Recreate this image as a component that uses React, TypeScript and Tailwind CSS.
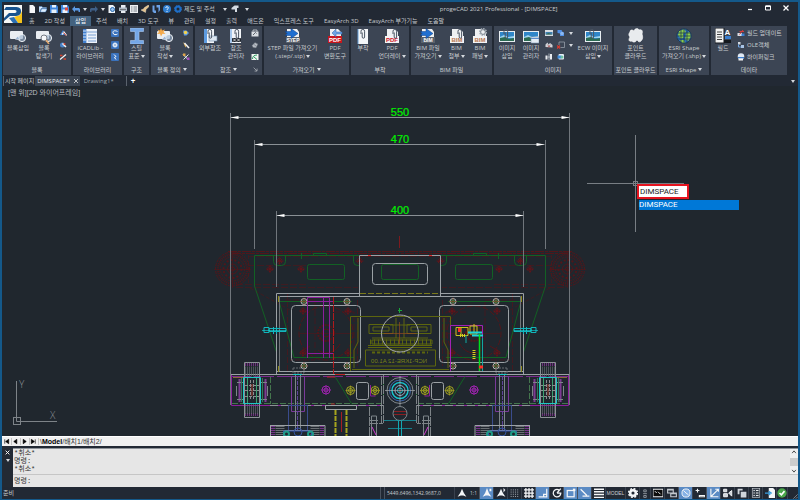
import React from "react";

type IconProps = { className?: string; children: React.ReactNode };

const Icon = ({ className = "size-4", children }: IconProps) => (
  <svg viewBox="0 0 16 16" className={className} aria-hidden="true">
    {children}
  </svg>
);

/* ---------- shared icon parts ---------- */

const Clip = ({ x = 0 }: { x?: number }) => (
  <path
    d={`M${x + 5} 6V3.2a1.8 1.8 0 0 1 3.6 0V9a1.2 1.2 0 0 1-2.4 0V4.5`}
    fill="none"
    stroke="#4b5563"
    strokeWidth="1"
  />
);

const Landscape = () => (
  <>
    <rect x="0" y="3" width="16" height="11" fill="#e8eef2" />
    <rect x="1" y="4" width="14" height="9" fill="#2f86c8" />
    <path d="M1 9l4-2 4 2 6-1v2H1z" fill="#9fd4ef" />
    <path d="M1 13v-3l5-1 4 2 5-1v3z" fill="#2c6b52" />
  </>
);

const Bubble = () => (
  <>
    <rect x="0" y="3" width="13" height="8" rx="1" fill="#e9edf2" />
    <circle cx="12" cy="10" r="3.6" fill="#9db4cf" fillOpacity="0.6" stroke="#eef2f6" />
    <path d="M5 11l3-3 2 4z" fill="#9cb6d6" stroke="#eef2f6" strokeWidth="0.6" />
  </>
);

const FileBadge = ({ label, color, solid }: { label: string; color: string; solid?: boolean }) => (
  <>
    <path d="M3 1h8l3 3v11H3z" fill="#eef0f2" />
    <rect x="1" y="8" width="14" height="7" fill={solid ? color : "#f3f4f6"} />
    <text
      x="8"
      y="14"
      textAnchor="middle"
      fontFamily="Liberation Sans"
      fontWeight="bold"
      fontSize="6"
      fill={solid ? "#ffffff" : color}
    >
      {label}
    </text>
  </>
);

const ArrowFile = ({ label }: { label: string }) => (
  <>
    <path d="M2 1h10l2 3v11H1V9h1z" fill="#eef0f2" />
    <rect x="1" y="9" width="14" height="6" fill="#59616b" />
    <text x="8" y="14" textAnchor="middle" fontFamily="Liberation Sans" fontWeight="bold" fontSize="5" fill="#fff">
      {label}
    </text>
    <path d="M0 3.500h6V0.500l7 5-7 5v-3H0l2-2z" fill="#1f6fd1" stroke="#0d3f86" strokeWidth="0.5" />
  </>
);

/* ---------- ribbon icons ---------- */

const big: Record<string, React.ReactNode> = {
  insert: <Bubble />,
  explore: (
    <>
      <Bubble />
      <circle cx="8" cy="10" r="3" fill="#f5f7fa" stroke="#555d68" strokeWidth="0.8" />
      <path d="M10 12l3 4" stroke="#e3a86b" strokeWidth="1.6" />
    </>
  ),
  lib: (
    <>
      <rect x="1" y="1" width="14" height="14" fill="#eef3fa" />
      <path d="M4 1v14M1 4h14M6 7h8M6 10h8M6 13h8" stroke="#5b8cc9" strokeWidth="0.8" />
      <path d="M1 1h3v14H1z" fill="#3f7fd0" />
      <path d="M1 3h3M1 6h3M1 9h3M1 12h3" stroke="#fff" strokeWidth="0.8" />
    </>
  ),
  steel: <path d="M1.500 0h13v3.500H10v9h4.500V16h-13v-3.500H6v-9H1.500z" fill="#75a7e6" stroke="#a9cbf5" strokeWidth="0.6" />,
  create: (
    <>
      <Bubble />
      <path d="M4 0l1 2.500L8 1.500 6.500 4 8.500 6 5.500 5.800 4 8.500 3 5.800 0 6l2-2L0.500 1.500 3 2.500z" fill="#f4a94a" />
    </>
  ),
  xref: (
    <>
      <path d="M2 1h10v14H2z" fill="#f1f4f8" />
      <path d="M2 1h3v14H2z" fill="#5d9be0" />
      <rect x="7" y="8" width="8" height="5" fill="#dce6f1" stroke="#6e8cab" strokeWidth="0.6" />
      <Clip x={1} />
    </>
  ),
  xrefMgr: (
    <>
      <path d="M2 1h11v14H2z" fill="#f1f4f8" />
      <rect x="4" y="10" width="9" height="4" fill="#20262e" />
      <path d="M5 10.500l3 3M8 10.500l-3 3M9 10.500l3 3M12 10.500l-3 3" stroke="#fff" strokeWidth="0.7" />
      <path d="M3 1v14" stroke="#5d9be0" />
      <Clip x={2} />
    </>
  ),
  step: <ArrowFile label="STEP" />,
  pdf: (
    <>
      <FileBadge label="PDF" color="#c8161d" solid />
      <path d="M15 4H9V1L5 5l4 4V6h6z" fill="#6fa5e4" stroke="#2c62a8" strokeWidth="0.5" />
    </>
  ),
  attach: (
    <>
      <path d="M3 1h10v15H3z" fill="#f4f6f8" />
      <path d="M3 1v15" stroke="#68a0d8" />
      <Clip x={1} />
    </>
  ),
  pdfUnder: (
    <>
      <FileBadge label="PDF" color="#d0162b" />
      <Clip x={4} />
    </>
  ),
  bimFile: <ArrowFile label="BIM" />,
  bimAttach: (
    <>
      <FileBadge label="BIM" color="#b87850" />
      <Clip x={4} />
    </>
  ),
  bimPanel: (
    <>
      <FileBadge label="BIM" color="#b87850" />
      <circle cx="11" cy="4" r="3" fill="none" stroke="#aab2ba" strokeWidth="2" strokeDasharray="1.500 0.8" />
      <circle cx="11" cy="4" r="2.400" fill="none" stroke="#828b95" />
    </>
  ),
  imgInsert: (
    <>
      <Landscape />
      <Clip />
    </>
  ),
  imgMgr: (
    <>
      <Landscape />
      <rect x="8" y="9" width="8" height="6" fill="#e5edf5" stroke="#7a93ad" strokeWidth="0.6" />
      <path d="M8 10.500h8" stroke="#5b8cc9" />
    </>
  ),
  cloud: (
    <path
      d="M2 4c0-3 3-2 4-1 1-3 4-3 5-1 3-1 4 1 3 4 1 3 1 5-1 7-2 2-3 0-4-1-1 2-4 3-5 1-3 1-4-1-2-4-2-2-1-4 0-5z"
      fill="#e8ebee"
      stroke="#fff"
      strokeWidth="0.6"
    />
  ),
  globe: (
    <>
      <circle cx="8" cy="8" r="7.600" fill="#2d6fb4" />
      <path d="M3 3l5-2 2 3-3 2 1 3-3 2-3-4zM10 5l4-1 1 5-3 4-3-2 1-3zM4 12l4 0 1 3-3 0z" fill="#8ccc4c" />
      <path d="M1 5h14M1 8h14M1 11h14M5 1v14M8 1v14M11 1v14" stroke="#16324f" strokeWidth="0.700" />
      <circle cx="8" cy="8" r="7.300" fill="none" stroke="#22384c" />
    </>
  ),
  field: (
    <>
      <rect x="0" y="0" width="9" height="15" fill="#f2f2f2" stroke="#171b20" />
      <path d="M2 4h5M2 6.500h5M2 9h5M2 11.500h5" stroke="#444" />
      <rect x="10" y="8" width="6" height="3" fill="#3b7fd0" />
      <rect x="9" y="12" width="7" height="3" fill="#14181d" />
      <text x="12.500" y="7" textAnchor="middle" fontFamily="Liberation Sans" fontWeight="bold" fontSize="8" fill="#fff">
        A
      </text>
    </>
  ),
};

const small: Record<string, React.ReactNode> = {
  a1: (
    <>
      <path d="M2 12L8 2l5 10z" fill="#3f82d6" />
      <path d="M6 11l4-5 5 7" stroke="#f2f4f7" strokeWidth="2.500" fill="none" />
      <path d="M9 7l5 6" stroke="#d8442e" strokeWidth="2" />
    </>
  ),
  a2: (
    <>
      <circle cx="7" cy="8" r="5" fill="#4b84c9" />
      <path d="M7 5l7 7" stroke="#f4f4f4" strokeWidth="3" />
      <circle cx="11" cy="6" r="2" fill="#d8442e" />
    </>
  ),
  a3: (
    <>
      <path d="M2 13L14 3" stroke="#f4f4f4" strokeWidth="2.500" />
      <path d="M2 5h5M9 12h5" stroke="#d8442e" strokeWidth="3" />
    </>
  ),
  l1: (
    <>
      <rect width="16" height="16" rx="2" fill="#3a72bd" />
      <path d="M13 5C7 2 3 4 4 8s6 4 9 2" stroke="#fff" strokeWidth="2" fill="none" />
    </>
  ),
  l2: (
    <>
      <rect width="16" height="16" rx="2" fill="#3a72bd" />
      <circle cx="8" cy="8" r="5" fill="#dfeaf7" />
      <path d="M5 5l6 6M11 5l-6 6" stroke="#6a94cd" />
    </>
  ),
  l3: (
    <>
      <rect width="16" height="16" rx="2" fill="#3a72bd" />
      <path d="M6 3l4 4-3 2 3 4" stroke="#fff" strokeWidth="2" fill="none" />
    </>
  ),
  b1: (
    <>
      <path d="M2 3h7l5 5-5 5H4z" fill="#5c9be5" />
      <circle cx="7" cy="7" r="3.500" fill="#f3d24c" />
    </>
  ),
  b2: (
    <>
      <path d="M2 2l5 11 2-4z" fill="#e9b95c" />
      <path d="M5 4l9 10" stroke="#f4f4f4" strokeWidth="3" />
    </>
  ),
  b3: (
    <>
      <path d="M2 3l10 10M13 3L3 13" stroke="#e0e4e8" strokeWidth="2" />
      <path d="M10 9h5v5h-5z" fill="#a54fc0" />
      <path d="M2 1h5v5H2z" fill="#e0a64a" />
    </>
  ),
  c1: (
    <>
      <path d="M1 5h14v10H1z" fill="#d9dde2" />
      <path d="M4 5V2h8v3" stroke="#d9dde2" fill="none" strokeWidth="1.500" />
      <path d="M4 12l5-5 2 2" stroke="#343c48" fill="none" strokeWidth="1.500" />
    </>
  ),
  c2: <path d="M2 9l6-6 6 3-4 8-6-1zM6 7l4 3" fill="#b5bbc3" stroke="#5a626c" />,
  c3: (
    <>
      <rect x="1" y="2" width="14" height="12" fill="#f2f5f2" />
      <path d="M3 12c0-5 3-8 9-8M6 8l6 5" stroke="#2c9a62" strokeWidth="2" fill="none" />
    </>
  ),
  i1: (
    <>
      <rect x="0" y="2" width="16" height="12" fill="#d7dde3" />
      <rect x="1" y="6" width="14" height="5" fill="#3f7fb0" />
      <path d="M1 11l6-3 8 3z" fill="#356a4d" />
    </>
  ),
  i2: (
    <>
      <path d="M1 12V7l4-4 2 4 3-3 5 4v5z" fill="#cfd3d8" />
      <path d="M5 8l6 5M11 8l-6 5" stroke="#a33" strokeWidth="1.200" />
    </>
  ),
  i3: (
    <>
      <path d="M1 5h4v8H1zM10 2h4v11h-4z" fill="#e9ecef" />
      <path d="M8 1v14M5 8h6" stroke="#cfd6dd" strokeWidth="1.500" />
    </>
  ),
  j1: (
    <>
      <path d="M1 2h8l2 4 3 1v7H6V9L1 8z" fill="#4f8fe6" />
      <circle cx="10" cy="9" r="3.500" fill="#8cb8f0" />
    </>
  ),
  j2: (
    <>
      <path d="M4 2h11v11H7M4 2v6" stroke="#9aa2ac" strokeWidth="1.500" fill="none" />
      <path d="M0 9l6 6M6 9l-6 6" stroke="#e03a2c" strokeWidth="2.200" />
    </>
  ),
  j3: (
    <>
      <rect x="3" y="2" width="11" height="11" rx="2" fill="#e7eef5" />
      <path d="M1 5h8v6H1z" fill="#3e8ddb" />
      <circle cx="10" cy="8" r="3" fill="#6fc1a1" />
    </>
  ),
  f1: (
    <>
      <path d="M1 8h9v6H1z" fill="#d9dde2" />
      <path d="M5 5h9M12 2l-7 9" stroke="#d33c3c" strokeWidth="2" />
      <path d="M9 9h6v5H9z" fill="#3b7fd0" />
    </>
  ),
  f2: (
    <>
      <path d="M2 2h5v5H2z" fill="#cfd6de" />
      <path d="M3 7v5h6" stroke="#6fa5e4" strokeWidth="2" fill="none" />
      <path d="M8 8h6v6H8z" fill="#a8c3e4" />
    </>
  ),
  f3: (
    <>
      <circle cx="8" cy="7" r="6.500" fill="#dfe9f4" />
      <path d="M2 8h12v3H2z" fill="#3b7fd0" />
      <path d="M3 11h9v4H3z" fill="#f4f4f4" />
    </>
  ),
};

const Caret = () => (
  <svg viewBox="0 0 4 3" className="inline-block h-[3px] w-1 shrink-0" aria-hidden="true">
    <path d="M0 0h4L2 3z" fill="#d5d9de" />
  </svg>
);

/* ---------- ribbon ---------- */

type BigProps = { icon: string; lines: string[]; caret?: boolean; width: string };

const BigButton = ({ icon, lines, caret, width }: BigProps) => (
  <button className={`flex flex-col items-center text-center ${width}`}>
    <Icon>{big[icon]}</Icon>
    {lines.map((line, i) => (
      <span key={line} className="flex items-center gap-px leading-2 whitespace-nowrap">
        {line}
        {caret && i === lines.length - 1 && <Caret />}
      </span>
    ))}
  </button>
);

const SmallColumn = ({ icons, carets = 0, width }: { icons: string[]; carets?: number; width: string }) => (
  <div className={`flex flex-col items-center gap-1 pt-px ${width}`}>
    {icons.map((name, i) => (
      <button key={name} aria-label={name} className="flex w-full items-center justify-center gap-1">
        <Icon className="size-2">{small[name]}</Icon>
        {carets > 0 && (i < carets ? <Caret /> : <span className="w-1" />)}
      </button>
    ))}
  </div>
);

type PanelProps = { title: string; caret?: boolean; launcher?: boolean; width: string; children: React.ReactNode };

const Panel = ({ title, caret, launcher, width, children }: PanelProps) => (
  <section className={`flex shrink-0 flex-col bg-[#3c4554] ${width}`}>
    <div className="flex h-[38px] pt-0.5">{children}</div>
    <h2 className="relative flex h-[11px] items-center justify-center gap-0.5 whitespace-nowrap">
      {title}
      {caret && <Caret />}
      {launcher && (
        <Icon className="absolute right-1 size-[5px]">
          <path d="M2 2l10 10M13 5v8H5" fill="none" stroke="#c8ccd0" strokeWidth="2" />
        </Icon>
      )}
    </h2>
  </section>
);

const Ribbon = () => (
  <div className="flex gap-0.5 overflow-hidden pl-px">
    <Panel title="블록" width="w-[68px]">
      <BigButton icon="insert" lines={["블록삽입"]} width="w-[30px]" />
      <BigButton icon="explore" lines={["블록", "탐색기"]} width="w-[22px]" />
      <SmallColumn icons={["a1", "a2", "a3"]} width="w-4" />
    </Panel>
    <Panel title="라이브러리" width="w-[49px]">
      <BigButton icon="lib" lines={["iCADLib -", "라이브러리"]} width="w-[34px]" />
      <SmallColumn icons={["l1", "l2", "l3"]} width="w-[15px]" />
    </Panel>
    <Panel title="구조" width="w-[25px]">
      <BigButton icon="steel" lines={["스틸", "표준"]} caret width="w-full" />
    </Panel>
    <Panel title="블록 정의" caret width="w-[42px]">
      <BigButton icon="create" lines={["블록", "작성"]} caret width="w-[28px]" />
      <SmallColumn icons={["b1", "b2", "b3"]} width="w-[14px]" />
    </Panel>
    <Panel title="참조" caret launcher width="w-[67px]">
      <BigButton icon="xref" lines={["외부참조"]} width="w-[30px]" />
      <BigButton icon="xrefMgr" lines={["참조", "관리자"]} width="w-[22px]" />
      <SmallColumn icons={["c1", "c2", "c3"]} width="w-[15px]" />
    </Panel>
    <Panel title="가져오기" caret width="w-[85px]">
      <BigButton icon="step" lines={["STEP 파일 가져오기", "(.step/.stp)"]} caret width="w-[57px]" />
      <BigButton icon="pdf" lines={["PDF", "변환도구"]} width="w-[28px]" />
    </Panel>
    <Panel title="부착" width="w-[58px]">
      <BigButton icon="attach" lines={["부착"]} width="w-6" />
      <BigButton icon="pdfUnder" lines={["PDF", "언더레이"]} caret width="w-[34px]" />
    </Panel>
    <Panel title="BIM 파일" width="w-[81px]">
      <BigButton icon="bimFile" lines={["BIM 파일", "가져오기"]} caret width="w-[34px]" />
      <BigButton icon="bimAttach" lines={["BIM", "첨부"]} caret width="w-[23px]" />
      <BigButton icon="bimPanel" lines={["BIM", "패널"]} caret width="w-6" />
    </Panel>
    <Panel title="이미지" width="w-[118px]">
      <BigButton icon="imgInsert" lines={["이미지", "삽입"]} width="w-[26px]" />
      <BigButton icon="imgMgr" lines={["이미지", "관리자"]} width="w-[22px]" />
      <SmallColumn icons={["i1", "i2", "i3"]} width="w-[14px]" />
      <SmallColumn icons={["j1", "j2", "j3"]} carets={2} width="w-[18px]" />
      <BigButton icon="imgInsert" lines={["ECW 이미지", "삽입"]} caret width="w-[38px]" />
    </Panel>
    <Panel title="포인트 클라우드" width="w-[43px]">
      <BigButton icon="cloud" lines={["포인트", "클라우드"]} width="w-full" />
    </Panel>
    <Panel title="ESRI Shape" caret width="w-[50px]">
      <BigButton icon="globe" lines={["ESRI Shape", "가져오기 (.shp)"]} caret width="w-full" />
    </Panel>
    <Panel title="데이타" width="w-[76px]">
      <BigButton icon="field" lines={["필드"]} width="w-6" />
      <div className="flex flex-col gap-1 pt-px">
        {[
          ["f1", "필드 업데이트"],
          ["f2", "OLE객체"],
          ["f3", "하이퍼링크"],
        ].map(([icon, label]) => (
          <button key={icon} className="flex items-center gap-0.5 pl-0.5 leading-2 whitespace-nowrap">
            <Icon className="size-2">{small[icon]}</Icon>
            {label}
          </button>
        ))}
      </div>
    </Panel>
  </div>
);

/* ---------- title bar ---------- */

const quick: [string, React.ReactNode][] = [
  ["새로 만들기", <path d="M3 0h7l4 4v12H3z" fill="#f4f6f8" />],
  ["열기", <path d="M0 3h6l1 2h8v2H4L2 14H0zM5 8h11l-3 6H3z" fill="#dfeefc" stroke="#4b8fdc" strokeWidth="0.8" />],
  [
    "저장",
    <>
      <path d="M0 0h13l3 3v13H0z" fill="#3f86de" />
      <path d="M4 0h8v5H4zM3 9h10v7H3z" fill="#e8f1fb" />
    </>,
  ],
  [
    "다른 이름으로 저장",
    <>
      <path d="M0 0h13l3 3v13H0z" fill="#3f86de" />
      <path d="M4 0h8v5H4zM3 9h10v7H3z" fill="#e8f1fb" />
      <path d="M8 5h6v6H8z" fill="#e0483c" />
    </>,
  ],
  ["실행 취소", <path d="M6 2v4h8l2 2v6h-3v-3H6v4L0 8z" fill="#5c9be5" />],
  ["다시 실행", <path d="M10 2v4H2L0 8v6h3v-3h7v4l6-7z" fill="#3f5f86" />],
  [
    "미리보기",
    <>
      <path d="M1 0h9l4 4v12H1z" fill="#eef3f8" />
      <circle cx="9" cy="9" r="4" fill="#9cc4ee" stroke="#2b6cb0" strokeWidth="2" />
    </>,
  ],
  [
    "인쇄",
    <>
      <path d="M4 0h9v6H4zM4 10h9v6H4z" fill="#e8edf2" />
      <path d="M0 5h16v7H0z" fill="#aeb8c4" />
      <path d="M2 9h12v1H2z" fill="#333" />
    </>,
  ],
  [
    "목록",
    <>
      <rect width="16" height="16" fill="#eceff2" />
      <path d="M2 4h3M7 4h7M2 8h3M7 8h7M2 12h3M7 12h7" stroke="#545c66" strokeWidth="1.500" />
    </>,
  ],
  ["특성 일치", <path d="M15 0l1 3-6 6-1 6-9-5 5-2 2-3z" fill="#e5c48d" stroke="#fff3db" strokeWidth="0.8" />],
  ["전환", <path d="M1 1h4v10h3v5H4l-3-3zM9 0h7v10l-3 5V5H9z" fill="#6ca2e6" />],
  [
    "도움말",
    <>
      <circle cx="8" cy="8" r="8" fill="#2f7ed0" />
      <path d="M5.500 6a2.500 2.500 0 1 1 3.500 2.200c-1 .4-1 1-1 2M8 12v2" stroke="#fff" strokeWidth="1.800" fill="none" />
    </>,
  ],
  [
    "작업공간",
    <>
      <circle cx="8" cy="8" r="5" fill="none" stroke="#1f6fc8" strokeWidth="4" />
      <circle cx="8" cy="8" r="7" fill="none" stroke="#1f6fc8" strokeWidth="2" strokeDasharray="3 2.500" />
    </>,
  ],
];

const menus = [
  "홈",
  "2D 작성",
  "삽입",
  "주석",
  "배치",
  "3D 도구",
  "뷰",
  "관리",
  "설정",
  "출력",
  "애드온",
  "익스프레스 도구",
  "EasyArch 3D",
  "EasyArch 부가기능",
  "도움말",
];

const TitleBar = () => (
  <header className="relative flex h-6">
    <svg viewBox="0 0 18 18" className="mt-[3px] ml-0.5 size-[18px] shrink-0" aria-hidden="true">
      <rect width="18" height="18" fill="#f6f7f5" />
      <path d="M18 6v12h-4L10 12l6-2z" fill="#f4c21b" />
      <path d="M14 18H9l-4-5 5-1z" fill="#2a6fb4" />
      <path d="M2 2h9c4 0 6 1 6 4.500S14 11 11 11H6l-6 5v-3l5-5h6c2 0 2-3 0-3H0z" fill="#17538f" />
    </svg>
    <div className="flex min-w-0 flex-1 flex-col">
      <div className="flex h-[14px] items-center pl-1.5">
        <div className="flex items-center gap-[3px]">
          {quick.map(([label, shape], i) => (
            <React.Fragment key={label}>
              <button aria-label={label}>
                <Icon className="size-2">{shape}</Icon>
              </button>
              {(i === 4 || i === 5) && <Caret />}
            </React.Fragment>
          ))}
        </div>
        <button className="ml-0.5 flex items-center gap-2 whitespace-nowrap">
          제도 및 주석 <Caret />
        </button>
        <button aria-label="레이어" className="ml-1">
          <Icon className="size-2">
            <path d="M1 6l6-5h8v5h-3v8H8V9H1z" fill="#d4dae1" />
          </Icon>
        </button>
        <span className="ml-1.5 flex">
          <Caret />
        </span>
      </div>
      <nav className="flex h-[10px] items-center pl-0.5 whitespace-nowrap">
        {menus.map((m) => (
          <a
            key={m}
            href="#"
            className={m === "삽입" ? "bg-[#43627f] px-[5px] leading-[10px] text-white" : "px-[5px] leading-[10px]"}
          >
            {m}
          </a>
        ))}
      </nav>
    </div>
    <h1 className="absolute top-[3px] left-[55%] leading-2">progeCAD 2021 Professional - [DIMSPACE]</h1>
    <div className="absolute top-0.5 right-2 flex gap-2.5">
      <button aria-label="최소화">
        <Icon className="size-2">
          <path d="M4 11h8" stroke="#fff" strokeWidth="2.500" />
        </Icon>
      </button>
      <button aria-label="최대화">
        <Icon className="size-2">
          <path d="M3 4h10v8H3z" fill="none" stroke="#fff" strokeWidth="2" />
          <path d="M3 4.500h10" stroke="#fff" strokeWidth="3" />
        </Icon>
      </button>
      <button aria-label="닫기">
        <Icon className="size-2">
          <path d="M3 3l10 10M13 3L3 13" stroke="#fff" strokeWidth="2.500" />
        </Icon>
      </button>
    </div>
  </header>
);

const DocTabs = () => (
  <div className="flex h-[11px] items-stretch pt-px pl-px whitespace-nowrap">
    <button className="border-l border-[#5a626d] px-px">시작 페이지</button>
    <button className="flex items-center gap-0.5 bg-[#3b4553] pl-0.5 text-[#e6e9ec]">
      DIMSPACE*
      <Icon className="size-2">
        <path d="M4 4l8 8M12 4l-8 8" stroke="#c8ccd0" strokeWidth="1.800" />
      </Icon>
    </button>
    <button className="w-[47px] border-r border-[#5a626d] pl-1 text-left text-[#9fa6ae]">Drawing1*</button>
    <button className="pl-1 text-[8px] leading-2 font-bold text-white">+</button>
    <button aria-label="탭 목록" className="mr-[3px] ml-auto">
      <Caret />
    </button>
  </div>
);

/* ---------- drawing ---------- */

const Screw = ({ x, y }: { x: number; y: number }) => (
  <g fill="none">
    <circle cx={x} cy={y} r="3" stroke="#b4b8b4" />
    <circle cx={x} cy={y} r="1.500" stroke="#3e9a4a" />
    <path d={`M${x - 4} ${y}h8M${x} ${y - 4}v8`} stroke="#a33a2a" strokeWidth="0.500" />
  </g>
);

const Target = ({ x, y, color }: { x: number; y: number; color: string }) => (
  <g fill="none" stroke={color}>
    <circle cx={x} cy={y} r="4" />
    <circle cx={x} cy={y} r="2" />
    <path d={`M${x - 5} ${y}h10M${x} ${y - 5}v10`} strokeWidth="0.700" />
  </g>
);

const RedHole = ({ x, y }: { x: number; y: number }) => (
  <g fill="none" stroke="#6d1317">
    <circle cx={x} cy={y} r="2.500" strokeDasharray="2 1" />
    <circle cx={x} cy={y} r="1" />
    <path d={`M${x - 4} ${y}h8M${x} ${y - 4}v8`} strokeWidth="0.600" />
  </g>
);

const Half = () => (
  <g fill="none">
    {/* dark red wheel and rail */}
    <g stroke="#52161a">
      <circle cx="232.500" cy="269" r="17" strokeDasharray="3 1" />
      <circle cx="232.500" cy="269" r="14.500" strokeDasharray="1 1" strokeWidth="2" />
      <circle cx="232.500" cy="269" r="12" strokeDasharray="2 1" />
      <circle cx="232.500" cy="269" r="9" strokeDasharray="2 2" strokeWidth="2" />
      <circle cx="232.500" cy="269" r="5" />
      <circle cx="232.500" cy="269" r="2" />
      <path d="M214 269.500h37M232.500 251v37" strokeWidth="0.600" />
      <path d="M228 251.500h172M232 253.500h168" strokeDasharray="9 1 3 1" />
      <path d="M248 256.500h152M248 265.500h58M306 284.500h-70M236 287.500h122" strokeDasharray="7 2" strokeWidth="0.600" />
      <path d="M248.500 255v30M250 288l40 22" strokeDasharray="4 2" strokeWidth="0.600" />
      <path d="M287.500 293v80M357.500 300v66M285 300h30v60h-25M334 312h20v48" strokeDasharray="6 2" strokeWidth="0.700" />
      <circle cx="326" cy="333" r="27" strokeDasharray="6 2" />
      <circle cx="326" cy="333" r="8" strokeDasharray="2 1" strokeWidth="2" />
      <circle cx="326" cy="333" r="4" />
      <path d="M300 333.500h52" strokeWidth="0.600" />
      <path d="M300 352l10-6M318 350c8 6 18 2 22-6" />
    </g>
    <RedHole x={270} y={269} />
    <RedHole x={301} y={269} />
    <RedHole x={279.5} y={261} />
    <RedHole x={359.5} y={261} />
    <RedHole x={303} y={311} />
    <RedHole x={348} y={311} />
    <RedHole x={303} y={353} />
    <RedHole x={348} y={353} />

    {/* green outlines */}
    <g stroke="#126124">
      <path d="M254.500 286V255.500H359M254.500 286l22 66M279 301l15 56.500h60M279.500 301.500H352" />
      <rect x="307.500" y="264.500" width="37" height="15" rx="2" />
      <path d="M273.500 255.500v6q0 4 4 4h4q4 0 4-4v-6M353.500 255.500v6q0 4 4 4h2M313.500 255v-1.500h13V255M301.500 253v6" />
    </g>

    {/* housing */}
    <g stroke="#9ba1a5">
      <path d="M230.500 113v292M254.500 140v109M276.500 211v76" stroke="#70767c" />
      <path d="M359.500 293.500H276.500V374.500M400 296.500H279.500M276.500 371.500H400M359.500 296V255.500H400" />
      <path d="M279.500 297v74" stroke="#6f7478" />
      <rect x="291.500" y="305.500" width="69" height="57" rx="4" />
    </g>
    <path d="M278.500 296v6M278.500 366v6" stroke="#8c8a1e" />
    <Screw x={304} y={301.5} />
    <Screw x={347} y={301.5} />
    <Screw x={304} y={366} />
    <Screw x={347} y={366} />

    {/* cyan bolt */}
    <path d="M264 327.500h5v5h-5zM269 328.500h17v3h-17zM273.500 327v7M276.500 327v7" stroke="#12b5bd" />
    <path d="M262 330.500h24" stroke="#0fdce0" strokeWidth="0.600" />

    {/* lower beam */}
    <path d="M231 374.500h169" stroke="#9ba1a5" />
    <path d="M231 376.500h169" stroke="#7a2a8c" strokeDasharray="20 3" />
    <path d="M231.500 375v30.500H384" stroke="#8c1f9c" />
    <path d="M233 377.500h20" stroke="#8a6a3a" />
    <path d="M270.500 377v27M232 403.500h150" stroke="#44764d" strokeDasharray="6 2" />
    <path d="M335 376.500l17 28M383.500 378v26" stroke="#126124" />
    <path d="M270 405.500h114" stroke="#8c9196" strokeDasharray="8 3" />

    {/* roller block */}
    <path d="M244.500 362.500h15v55h-15z" stroke="#8c9196" />
    <path d="M245 364.500h14M245 414.500h14" stroke="#6d2f7c" strokeWidth="3" strokeDasharray="1 1" />
    <path d="M245 371.500h14M245 409h14" stroke="#6d7276" strokeWidth="10" strokeDasharray="1 1" opacity="0.600" />
    <path d="M243.500 377.500h17v26h-17z" stroke="#1ec7c7" />
    <path d="M247.500 378v25M256.500 378v25" stroke="#3ba06e" />
    <path d="M250.500 380v20M253.500 380v20M245 385.500h14M245 390.500h14M245 396.500h14" stroke="#8a8e91" strokeDasharray="3 1" />
    <path d="M239.500 379v23M265.500 379v23" stroke="#7e3a93" strokeWidth="2" />
    <path d="M237 382.500h6M237 399.500h6M261 382.500h6M261 399.500h6M236.500 386v10M267.500 386v10" stroke="#7d8589" />
    <path d="M241.500 378v24M262.500 378v24" stroke="#2e7a5a" />
    <path d="M252 384v12" stroke="#a33a2a" />

    {/* pillar */}
    <path d="M291.500 376.500h13v35h-13z" stroke="#7a3a9a" />
    <path d="M295.500 374v56M300.500 374v56" stroke="#7d8589" />
    <path d="M297.500 376v54" stroke="#60469a" strokeDasharray="4 1" />
    <path d="M293 368h11v5h-11z" stroke="#666c70" strokeDasharray="2 1" />
    <path d="M293 374.500h9" stroke="#1ec7c7" />
    <path d="M288.500 405.500h19v25h-19z" stroke="#3a4c8c" />
    <path d="M270 425.500h55V436M270.500 425v11M284 430.500h30" stroke="#9ba1a5" />
    <path d="M273 426v10M322 426v10" stroke="#76308a" strokeWidth="4" strokeDasharray="1 1" />
    <path d="M280 426v10M315 426v10" stroke="#6b7074" strokeWidth="9" strokeDasharray="1 1" />
    <path d="M283.500 436v-5h28v5" stroke="#2f4fae" />
    <circle cx="298" cy="432" r="4" stroke="#35549e" />
    <circle cx="286.500" cy="434" r="2.500" stroke="#1f9a86" strokeWidth="2" />
    <circle cx="310.500" cy="434" r="2.500" stroke="#1f9a86" strokeWidth="2" />

    <Target x={326} y={390} color="#a322b4" />
    <Target x={350.5} y={390.5} color="#a5a51e" />
    <Target x={375} y={390.5} color="#a5a51e" />
    <rect x="356.500" y="382.500" width="12" height="17" rx="2" stroke="#9ba1a5" />
    <path d="M370.500 385v11h5" stroke="#8c1f9c" />

    {/* center joint */}
    <path d="M383.500 375v48M369.500 436V405.500M369 423.500h14M381.500 376v48" stroke="#7d8387" strokeDasharray="9 1" />
    <path d="M371.500 436V416h5v20M370 420.500h8" stroke="#7d8589" />
    <path d="M372 427l4 8" stroke="#d23ad2" />
  </g>
);

const Dim = ({ x1, x2, y, label }: { x1: number; x2: number; y: number; label: string }) => (
  <g>
    <path d={`M${x1} ${y}H${x2}`} stroke="#8a9095" />
    <path d={`M${x1} ${y}l8-1.500v3zM${x2} ${y}l-8-1.500v3z`} fill="#fff" />
    <text x="400" y={y - 2} textAnchor="middle" fontFamily="Liberation Sans" fontSize="11" fill="#00f000" stroke="#00f000" strokeWidth="0.200">
      {label}
    </text>
  </g>
);

const Drawing = () => (
  <svg className="absolute inset-0 h-full w-full" role="img" aria-label="DIMSPACE">
    <g transform="translate(-2 -86)">
      <Half />
      <g transform="translate(800 0) scale(-1 1)">
        <Half />
      </g>

      <Dim x1={230.5} x2={569.5} y={117.5} label="550" />
      <Dim x1={254.5} x2={544.5} y={144.5} label="470" />
      <Dim x1={276.5} x2={523.5} y={215.5} label="400" />

      <g fill="none">
        <path d="M399.500 236v12" stroke="#7c1a1e" />
        <path d="M360 293.500h80" stroke="#7b7a1c" strokeDasharray="6 2" />
        <rect x="372.500" y="263.500" width="55" height="21" rx="3" stroke="#9ba1a5" />
        <rect x="381.500" y="264.500" width="37" height="15" rx="2" stroke="#126124" />
        <path d="M368 255.500h3M429 255.500h3" stroke="#e02a2a" />

        {/* name plate */}
        <g stroke="#5d660e">
          <path d="M350.500 371V316.500h100V371" />
          <path d="M352 369.500h97M368 345.500h64M368 347.500h64M365.500 350v16h70v-16z" />
          <path d="M369 324.500h24v9h-24zM407 324.500h24v9h-24zM373 327h16v4h-16zM411 327h16v4h-16zM372 340h60v4h-60z" />
          <path d="M370 342h62" strokeWidth="5" strokeDasharray="1 3" />
          <path d="M372 352.500h56" strokeWidth="2" strokeDasharray="3 2" />
          <path d="M358 318v24l-4 8v18M444 318v24l4 8v18M372 338h56" />
          <path d="M390 325h20M396 318v20M404 318v20" />
        </g>
        <path d="M384 333.500h32M399.500 322v22" stroke="#944a20" strokeWidth="0.700" />
        <path d="M398 310.500h4M399.500 308v5" stroke="#1aa83a" />
        <circle cx="400" cy="333.500" r="18.500" stroke="#a9adb0" />

        {/* left cylinder */}
        <path d="M307.500 358V297.500h22V358M323.500 297v61M307 301.500h26M307 353.500h26" stroke="#8c1f9c" />
        <path d="M333.500 297v77" stroke="#b01a1e" strokeWidth="1" strokeDasharray="7 1" />
        <path d="M335 374.500h10M327 377h8" stroke="#c02626" />

        {/* right clamp */}
        <path d="M450.500 371V325.500h32V371" stroke="#a322b4" />
        <path d="M456 327.500h12v8h-12zM461 328v7M470 326h7v8h-7zM474 324v8" stroke="#c9c41e" />
        <path d="M458 330h3" stroke="#ff3028" strokeWidth="4" />
        <path d="M468 332.500h14M472 335.500h11" stroke="#19d6dc" strokeWidth="2" />
        <path d="M479.500 334v37" stroke="#00e01a" strokeWidth="1.500" />
        <path d="M466 335v8M482.500 338v33" stroke="#12a8a0" />
        <path d="M474 350v10M460 335.500h6" stroke="#d8d21e" strokeWidth="3" strokeDasharray="1 1" />
        <path d="M479 367h4" stroke="#ff3028" strokeWidth="3" />

        {/* hub */}
        <circle cx="400" cy="390.500" r="13" stroke="#7f868b" />
        <circle cx="400" cy="390.500" r="10.500" stroke="#3c62a6" />
        <circle cx="400" cy="390.500" r="8" stroke="#19c2cc" strokeWidth="1.500" />
        <circle cx="400" cy="390.500" r="5" stroke="#8fa8c6" />
        <circle cx="400" cy="390.500" r="2.500" stroke="#19c2cc" />
        <path d="M385 390.500h30M400 376v30" stroke="#b8bcc0" strokeWidth="0.600" />
        <circle cx="400" cy="413.500" r="7" stroke="#7f868b" />
        <path d="M394 411.500h12M394 414.500h12" stroke="#8a1e22" />
        <path d="M398.500 421v15M401.500 421v15" stroke="#12a8b4" />
        <path d="M384 420.500h32M388 428.500h24" stroke="#12a8b4" strokeWidth="0.700" />

        {/* left spindle */}
        <path d="M325.500 405.500h31v4h-31z" stroke="#9ba1a5" />
        <path d="M335.500 410v26M346.500 410v26" stroke="#a5a51e" strokeWidth="2" strokeDasharray="5 1" />
        <path d="M341.500 412v20M331 404h4" stroke="#a81e22" />
      </g>
      <g transform="translate(800 0) scale(-1 1)">
        <text x="373" y="363" fontFamily="Liberation Sans" fontSize="6" fill="#7a8414">
          NCP-1KRE-12 A1.00
        </text>
      </g>

      {/* crosshair */}
      <g fill="none" stroke="#787e84">
        <path d="M587 183.500h97M635.500 135v97" />
        <rect x="633.500" y="181.500" width="4" height="4" />
      </g>

      {/* ucs */}
      <g fill="none" stroke="#7d8388">
        <path d="M16.500 381v40.500H57" />
        <rect x="13.500" y="417.500" width="7" height="7" />
      </g>
      <g fontFamily="Open Sans" fontWeight="300" fontSize="10" fill="#8b9196">
        <text x="19" y="388">
          Y
        </text>
        <text x="50" y="419">
          X
        </text>
      </g>
    </g>
  </svg>
);

const Canvas = () => (
  <main className="relative min-h-0 flex-1 overflow-hidden bg-[#20272e]">
    <Drawing />
    <p className="relative pt-[3px] pl-1.5 font-['Liberation_Sans','Noto_Sans_CJK_KR',sans-serif] text-[7px] leading-2 text-[#b9bdc1]">
      [맨 위][2D 와이어프레임]
    </p>
    <div className="absolute top-[98px] left-[635px] w-[102px] font-[Roboto,sans-serif] text-[8px]">
      <input
        aria-label="명령 입력"
        defaultValue="DIMSPACE"
        className="block h-[15px] w-[52px] border-2 border-[#e5141f] bg-white px-px text-[#222]"
      />
      <div className="mt-px ml-0.5 h-[10px] bg-[#0078d7] leading-[10px] text-white">DIMSPACE</div>
    </div>
  </main>
);

/* ---------- bottom area ---------- */

const LayoutTabs = () => (
  <div className="flex h-[10px] items-center border-t border-white bg-[#f0f0f0] pl-px font-['Liberation_Sans','Noto_Sans_CJK_KR',sans-serif] text-[7px] leading-2 text-[#333]">
    {["M4 3v10M13 3L6 8l7 5z", "M11 3L4 8l7 5z", "M5 3l7 5-7 5z", "M3 3l7 5-7 5zM12 3v10"].map((d) => (
      <button key={d} aria-label="탭 이동" className="border-r border-[#c4c4c4] pr-px">
        <Icon className="size-[7px]">
          <path d={d} fill="#000" stroke="#000" strokeWidth="1.500" />
        </Icon>
      </button>
    ))}
    <span className="pl-px">\</span>
    <button className="font-bold text-black">Model</button>
    <span>/</span>
    <button>배치1</button>
    <span>/</span>
    <button>배치2</button>
    <span>/</span>
  </div>
);

const CommandLine = () => (
  <div className="mt-0.5 flex h-[39px] bg-[#232a34]">
    <div className="flex w-[11px] shrink-0 flex-col items-center gap-1 pt-0.5">
      <button aria-label="닫기" className="flex">
        <Icon className="size-[5px]">
          <path d="M2 2l12 12M14 2L2 14" stroke="#fff" strokeWidth="3" />
        </Icon>
      </button>
      <Caret />
    </div>
    <div className="flex min-w-0 flex-1 flex-col border-t border-[#8d9298] bg-[#e6e6e6] font-['Liberation_Mono','Noto_Sans_CJK_KR',monospace] text-[7px] leading-2 text-[#333]">
      <div className="flex h-[26px] justify-between border-b border-[#c6c6c6]">
        <div className="pl-px">
          <p>*취소*</p>
          <p>명령:</p>
          <p>*취소*</p>
        </div>
        <div className="flex w-2 flex-col items-center justify-between bg-[#f0f0f0]">
          <button aria-label="위로">
            <Icon className="size-[6px]">
              <path d="M3 11l5-6 5 6" fill="none" stroke="#444" strokeWidth="2.500" />
            </Icon>
          </button>
          <span className="h-2 w-full bg-[#cdcdcd]" />
          <button aria-label="아래로">
            <Icon className="size-[6px]">
              <path d="M3 5l5 6 5-6" fill="none" stroke="#444" strokeWidth="2.500" />
            </Icon>
          </button>
        </div>
      </div>
      <div className="flex flex-1 items-center pl-px">
        <label htmlFor="command">명령:</label>
        <input id="command" className="min-w-0 flex-1 bg-transparent pl-1 outline-none" />
      </div>
    </div>
  </div>
);

const W = "#f4f6f8";

const status: [string, boolean, React.ReactNode][] = [
  ["주석 가시성", true, <path d="M8 0l3 8 4 6-5-2H6l-5 2 4-6zM12 1h3v4h-3z" fill={W} />],
  ["주석 자동", false, <path d="M8 1l3 7 4 6-5-2H6l-5 2 4-6zM12 0l3 3-3 4z" fill={W} />],
  [
    "스냅",
    false,
    <path d="M1 3h14M1 6.500h14M1 10h14M1 13.500h14" stroke="#aab0b7" strokeWidth="1.500" strokeDasharray="1.600 1.900" />,
  ],
  ["그리드", false, <path d="M0 3h16M0 8h16M0 13h16M3 0v16M8 0v16M13 0v16" stroke={W} strokeWidth="2" />],
  ["직교", true, <path d="M14 1v13H1M9 14v-4h5" stroke={W} strokeWidth="2" fill="none" />],
  [
    "극좌표",
    false,
    <path d="M14 8A6 6 0 1 1 11 3M8 8h7M8 8l6-7" stroke={W} strokeWidth="2" fill="none" />,
  ],
  [
    "객체 스냅",
    true,
    <>
      <rect x="2" y="4" width="11" height="10" fill="none" stroke={W} strokeWidth="2" />
      <rect x="11" y="1" width="4" height="4" fill={W} />
    </>,
  ],
  ["추적", true, <path d="M1 2l10 10M4 13h11" stroke={W} strokeWidth="2" />],
  ["선가중치", false, <path d="M0 2h16M0 6h16M0 10.500h16M0 15h16" stroke={W} strokeWidth="2.300" />],
];

const status2: [string, boolean, React.ReactNode][] = [
  [
    "설정",
    false,
    <>
      <circle cx="8" cy="8" r="4.500" fill="none" stroke={W} strokeWidth="4" />
      <circle cx="8" cy="8" r="7" fill="none" stroke={W} strokeWidth="2.500" strokeDasharray="3 2.500" />
    </>,
  ],
  ["사용자", false, <path d="M6 3h4v3H6zM5 9h6M6 12h4v3H6z" stroke="#8d949c" strokeWidth="1.500" fill="none" />],
  [
    "명령 창",
    false,
    <>
      <rect x="0" y="2" width="16" height="12" fill="#0c0c0c" stroke={W} strokeWidth="1.500" />
      <path d="M3 5l3 3M8 6l4 4" stroke={W} strokeWidth="1.500" />
    </>,
  ],
  [
    "창",
    false,
    <path d="M1 2h9v6H1zM6 8h9v6H6zM1 3h9M6 9h9" stroke="#c4c9cf" strokeWidth="1.800" fill="#2b323d" />,
  ],
  [
    "시간",
    true,
    <>
      <circle cx="8" cy="8" r="6.500" fill="#86b2e6" stroke={W} strokeWidth="1.500" />
      <path d="M4 4l4 4 4 3" stroke={W} strokeWidth="1.500" fill="none" />
    </>,
  ],
  ["동적 입력", false, <path d="M1 4h6M4 1v6M7 12h9v2H7z" stroke={W} strokeWidth="1.800" />],
  ["좌표", true, <path d="M3 1v13h12M3 14L14 3M10 2h5v4" stroke={W} strokeWidth="1.800" fill="none" />],
  [
    "격리",
    false,
    <path d="M1 2h5v4H1zM1 9h6v5H1zM14 4l-5 4 5 5z" stroke={W} strokeWidth="1.500" fill="#cfd4da" />,
  ],
  ["순환", false, <path d="M1 1h8v3H4v6H1zM6 6h9v9H6z" fill="#cfd4da" />],
  [
    "속성",
    false,
    <>
      <rect x="2" y="1" width="12" height="14" fill="#3a424d" stroke="#c4c9cf" />
      <path d="M4 4h2M8 4h4M4 8h2M8 8h4M4 12h2M8 12h4" stroke={W} strokeWidth="1.500" />
    </>,
  ],
  [
    "내보내기",
    false,
    <>
      <path d="M6 0h7l3 3v13H6z" fill={W} />
      <path d="M0 8h8M6 5l4 3-4 3" stroke="#3aa0e0" strokeWidth="2" fill="none" />
    </>,
  ],
  [
    "상태",
    false,
    <>
      <circle cx="8" cy="8" r="7.500" fill="#4aa64a" />
      <path d="M4 8l3 3 5-6" stroke="#fff" strokeWidth="2.500" fill="none" />
    </>,
  ],
];

type StatusProps = { label: string; on: boolean; width?: string; children: React.ReactNode };

const StatusButton = ({ label, on, width = "w-[14px]", children }: StatusProps) => (
  <button
    aria-label={label}
    className={`flex shrink-0 items-center justify-center border-l ${width} ${
      on ? "border-[#4a525e] bg-[#5b8bc4]" : "border-[#3a424e]"
    }`}
  >
    <Icon className="size-[10px]">{children}</Icon>
  </button>
);

const StatusBar = () => (
  <footer className="flex h-3 items-stretch text-[#c8ccd0]">
    <span className="self-center pl-px">준비</span>
    <div className="ml-auto flex items-stretch">
      <span className="mr-[3px] border-r border-[#4a525e]" />
      <span className="flex w-[70px] items-center border-l border-[#4a525e] pl-0.5 text-[5px]">5449.6496,1342.9687,0</span>
      <StatusButton label="축척" on={false}>
        <path d="M8 1l3 7 4 6-5-2H6l-5 2 4-6z" fill={W} />
      </StatusButton>
      <span className="flex w-[11px] items-center justify-center text-[5px]">1:1</span>
      {status.map(([label, on, shape]) => (
        <StatusButton key={label} label={label} on={on}>
          {shape}
        </StatusButton>
      ))}
      <button className="w-5 shrink-0 border-l border-[#3a424e] font-['Liberation_Sans',sans-serif] text-[5px]">MODEL</button>
      {status2.map(([label, on, shape]) => (
        <StatusButton
          key={label}
          label={label}
          on={on}
          width={label === "사용자" || label === "상태" ? "w-[11px]" : "w-[14px]"}
        >
          {shape}
        </StatusButton>
      ))}
      <span className="flex w-[11px] items-end justify-end border-l border-[#3a424e]">
        <Icon className="size-[5px]">
          <path d="M15 1L1 15M15 9l-6 6" stroke="#8d949c" strokeWidth="2.500" />
        </Icon>
      </span>
    </div>
  </footer>
);

const App = () => {
  return (
    <div className="flex h-screen flex-col overflow-hidden border-2 border-b-1 border-[#14598a] bg-[#222934] font-['Open_Sans','Noto_Sans_CJK_KR',sans-serif] text-[6px] leading-2 text-[#c8ccd0]">
      <TitleBar />
      <Ribbon />
      <DocTabs />
      <Canvas />
      <LayoutTabs />
      <CommandLine />
      <StatusBar />
    </div>
  );
};

export default App;
